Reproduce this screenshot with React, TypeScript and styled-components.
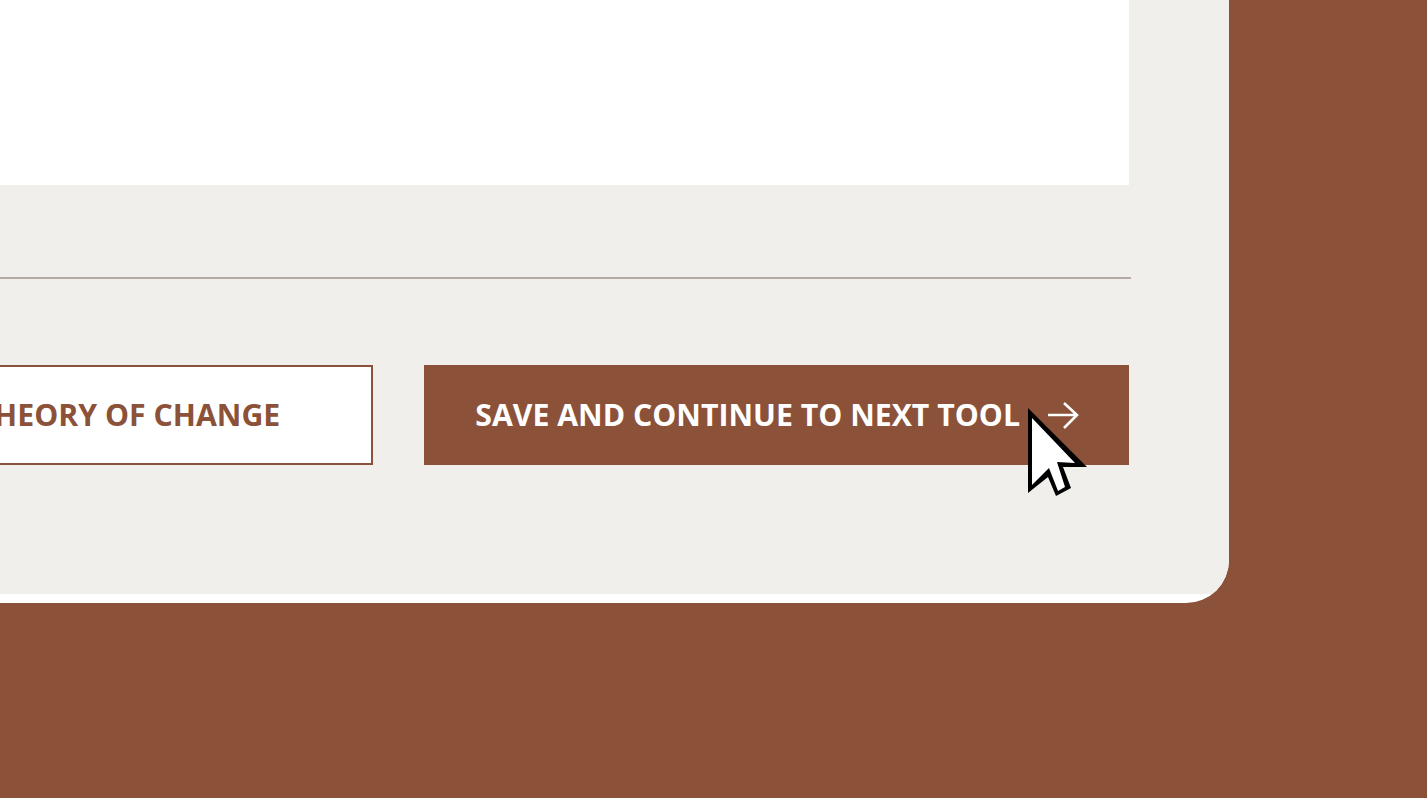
import React from 'react';
import styled, { createGlobalStyle } from 'styled-components';

const GlobalStyle = createGlobalStyle`
  html, body {
    margin: 0;
    padding: 0;
    background: #8b5239;
    font-family: "Open Sans", "Liberation Sans", sans-serif;
  }
`;

const Page = styled.div`
  width: 1427px;
  height: 798px;
  overflow: hidden;
  background: #8b5239;
`;

const Card = styled.div`
  width: 1229px;
  height: 603px;
  overflow: hidden;
  background: #ffffff;
  border-bottom-right-radius: 43px;
`;

const Sheet = styled.div`
  box-sizing: border-box;
  height: 594px;
  padding-right: 100px;
  background: #f1efec;
`;

const Panel = styled.div`
  height: 185px;
  background: #ffffff;
`;

const Divider = styled.hr`
  height: 2px;
  margin: 91.5px -2px 0 0;
  border: 0;
  background: #b3aaa4;
`;

const Actions = styled.div`
  display: flex;
  justify-content: flex-end;
  gap: 51px;
  margin-top: 86.5px;
`;

const Button = styled.button<{ $primary?: boolean }>`
  position: relative;
  flex-shrink: 0;
  box-sizing: border-box;
  display: flex;
  align-items: center;
  gap: 27px;
  height: 99.5px;
  padding: 0 ${props => (props.$primary ? '50px 1px 51px' : '91px 1px')};
  border: 2px solid #8b5239;
  border-width: ${props => (props.$primary ? '0' : '2px')};
  background: ${props => (props.$primary ? '#8b5239' : '#ffffff')};
  color: ${props => (props.$primary ? '#ffffff' : '#8b5239')};
  font-family: "Open Sans", "Liberation Sans", sans-serif;
  font-size: 30.25px;
  font-weight: 700;
  white-space: nowrap;
`;

const ArrowIcon = styled.svg`
  width: 32px;
  height: 28px;
  margin-top: 2px;
  flex-shrink: 0;
`;

const Cursor = styled.svg`
  position: absolute;
  left: 600px;
  top: 43px;
  width: 66px;
  height: 96px;
`;

function App(): JSX.Element {
  return (
    <Page>
      <GlobalStyle />
      <Card>
        <Sheet>
          <Panel />
          <Divider />
          <Actions>
            <Button>BACK TO THEORY OF CHANGE</Button>
            <Button $primary>
              SAVE AND CONTINUE TO NEXT TOOL
              <ArrowIcon viewBox="0 0 32 28" fill="none" stroke="#ffffff" strokeWidth="2.6">
                <path d="M1 14H30M17 2L30 14L17 27" />
              </ArrowIcon>
              <Cursor viewBox="0 0 66 96">
                <path d="M4 0L63 59L39 59L47 80L32 88L24 69L4 85Z" fill="#000000" />
                <path d="M8 10L51 55L33 54L41 79L34 83L25 60L8 77Z" fill="#ffffff" />
              </Cursor>
            </Button>
          </Actions>
        </Sheet>
      </Card>
    </Page>
  );
}

export default App;
